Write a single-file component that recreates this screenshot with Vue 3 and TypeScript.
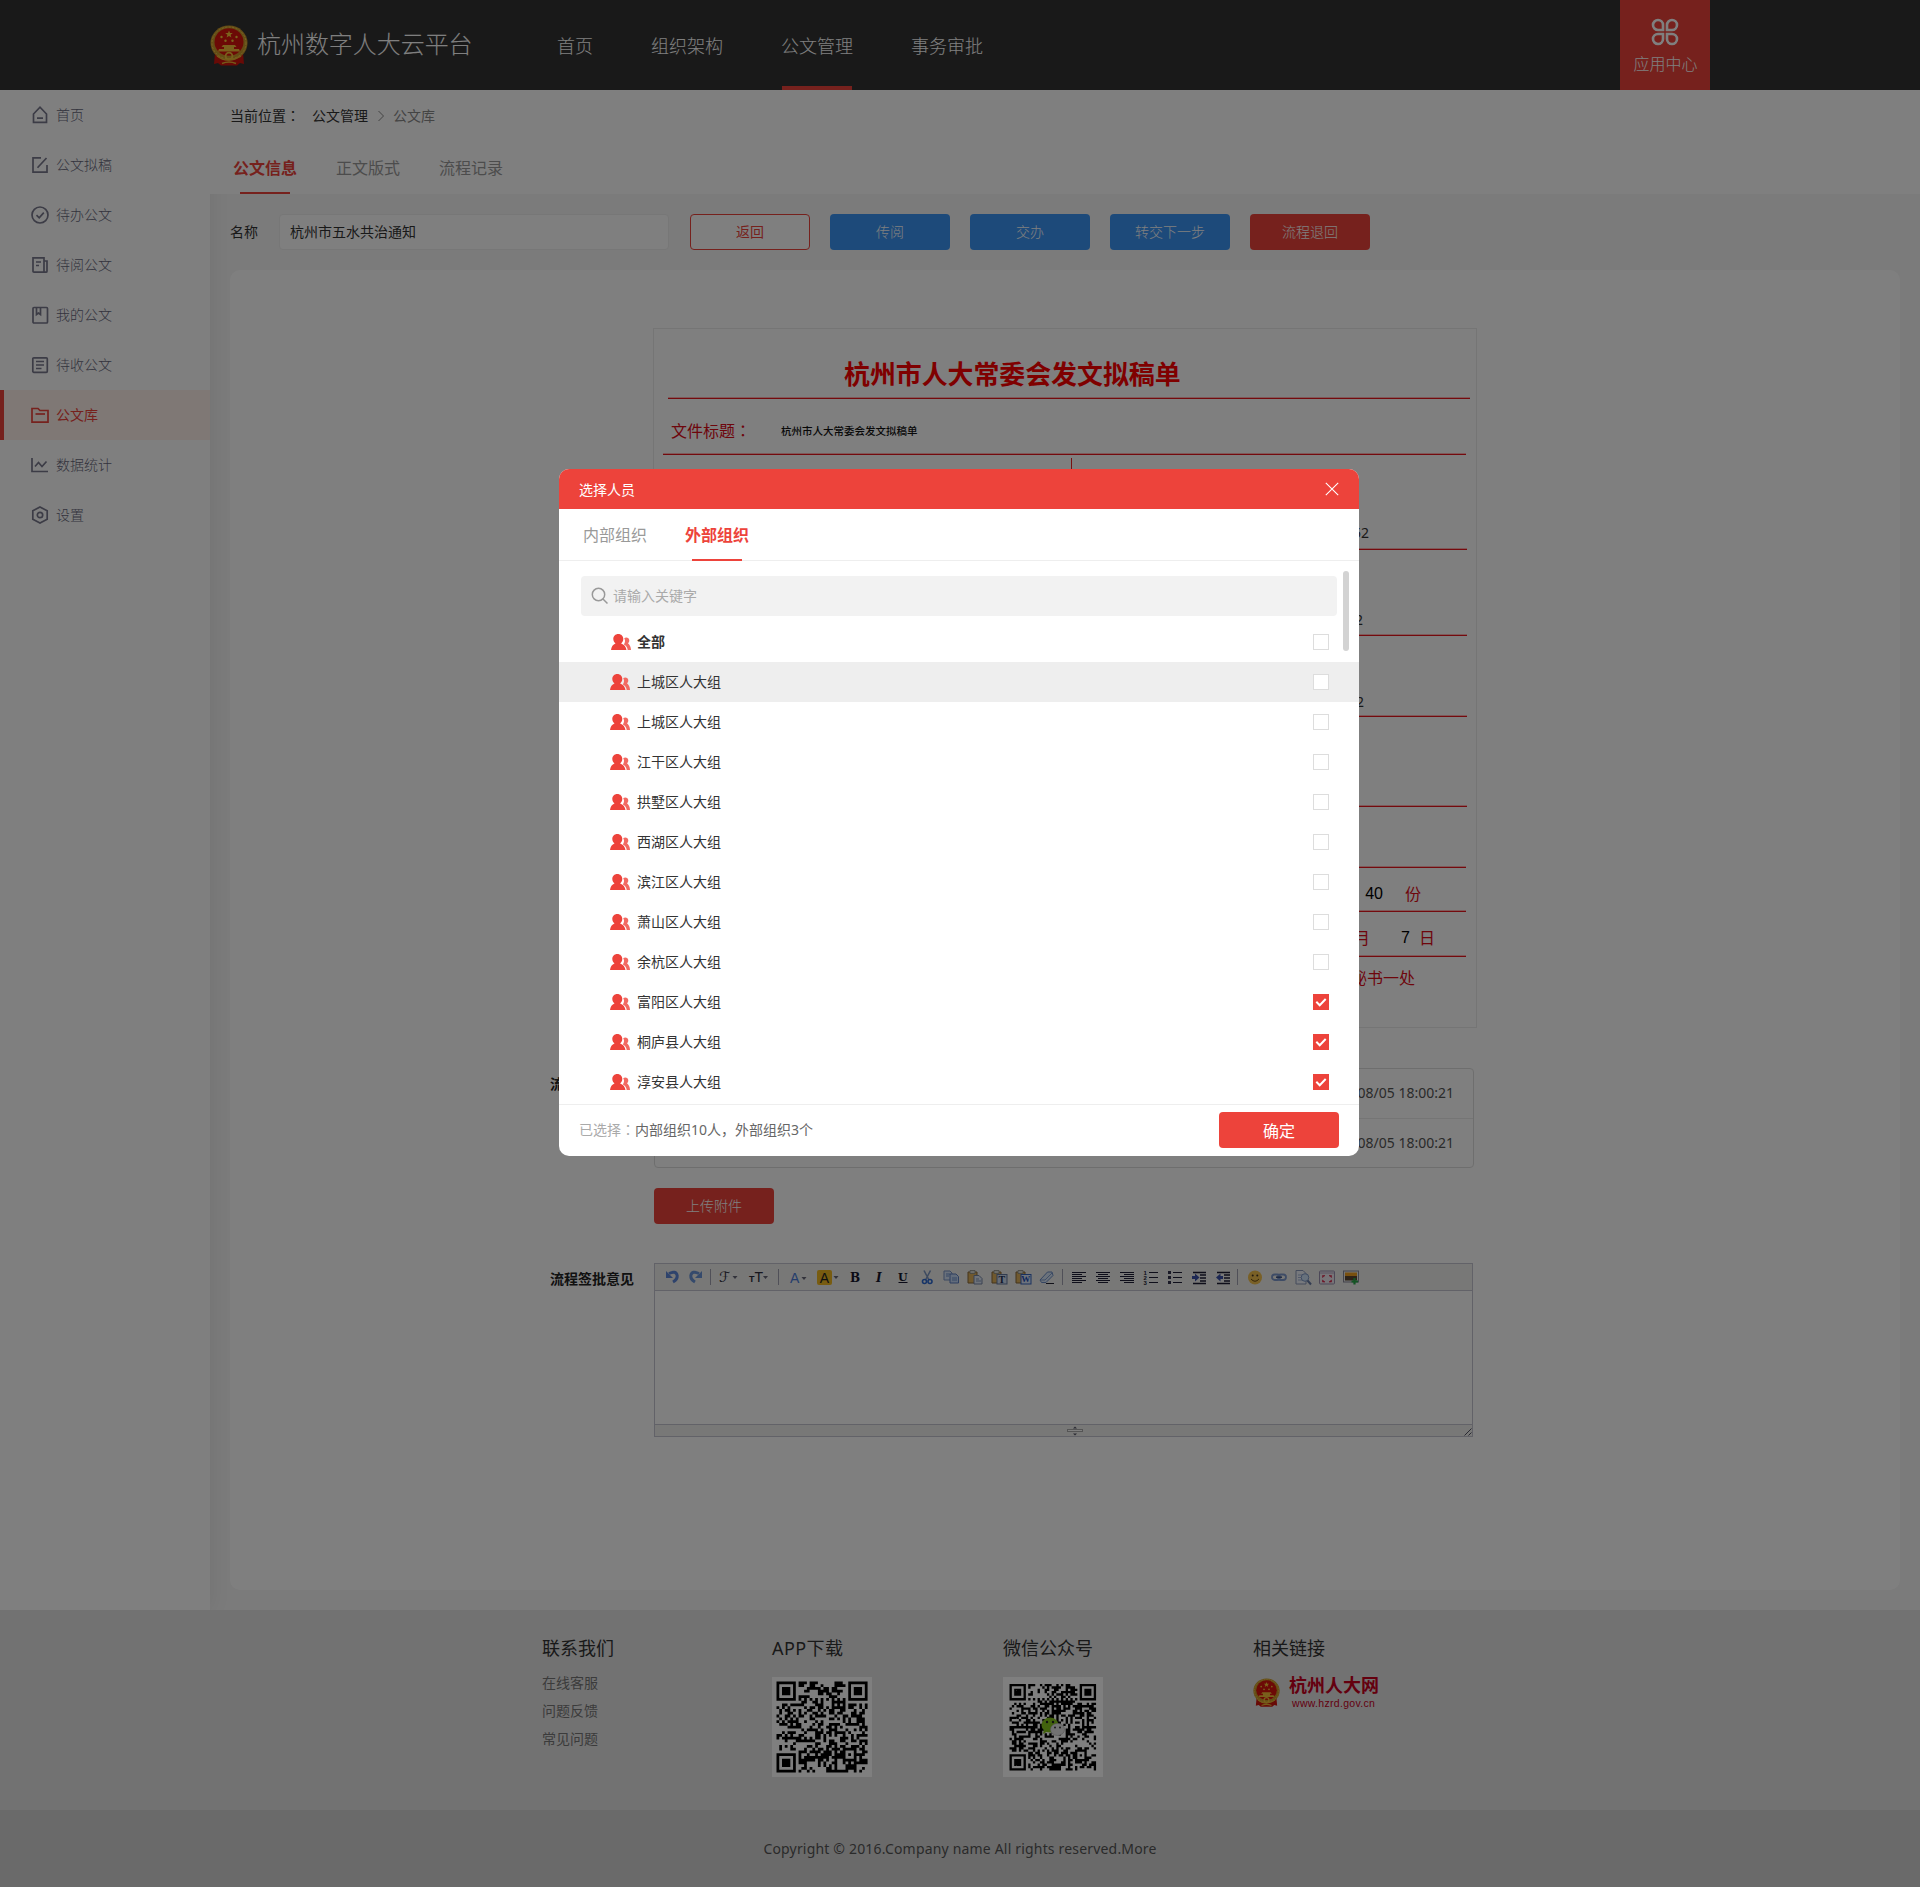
<script setup lang="ts">
interface SideItem { label: string; icon: string; active?: boolean }
interface Tool { kind: 'icon' | 'sep'; w: number; art?: string }
interface Group { name: string; checked: boolean; bold?: boolean; hover?: boolean }

const navItems: string[] = ['首页', '组织架构', '公文管理', '事务审批']

const sideItems: SideItem[] = [
  { label: '首页', icon: '<path d="M2.5 8 9 1.2 15.500 8V16.300H2.500Z"/><path d="M6 12.200h6"/>' },
  { label: '公文拟稿', icon: '<path d="M10 1.800H2V16.200H16V9"/><path d="M6.500 11.800 15.500 2"/>' },
  { label: '待办公文', icon: '<circle cx="9" cy="9" r="8"/><path d="M5.500 9.200 8.200 11.800 12.800 6.600"/>' },
  { label: '待阅公文', icon: '<path d="M2 1.800H13V16.200H3Q2 16.200 2 15.200Z"/><path d="M13 5h3v10.200q0 1-1 1h-2"/><path d="M5 6h5M5 9.500h3"/>' },
  { label: '我的公文', icon: '<rect x="2" y="1.500" width="14.500" height="15.500" rx="1"/><path d="M5.500 2v6.500L7.500 7l2 1.500V2"/>' },
  { label: '待收公文', icon: '<rect x="1.800" y="1.800" width="14.500" height="14.500" rx="1"/><path d="M5 5.500h8M5 9h8M5 12.500h5.500"/>' },
  { label: '公文库', icon: '<path d="M1 16V2.500H7L9 4.500H17V16.200H1Z"/><path d="M4.500 8h9.500"/>', active: true },
  { label: '数据统计', icon: '<path d="M1 2V15.500H17"/><path d="M4 10.500 7.500 6.500 11 10.500 15.500 5.500"/>' },
  { label: '设置', icon: '<path d="M9 1 16.200 4.800V13.200L9 17 1.800 13.200V4.800Z"/><circle cx="9" cy="9" r="2.700"/>' }
]

const actions: { label: string; tone: string }[] = [
  { label: '返回', tone: 'outline' },
  { label: '传阅', tone: 'blue' },
  { label: '交办', tone: 'blue' },
  { label: '转交下一步', tone: 'blue' },
  { label: '流程退回', tone: 'red' }
]

const clip = '<path d="M1 3h9v11H1z" fill="#e0b25c" stroke="#8a6a3a"/><path d="M3 1.500h5v3H3z" fill="#d8d8d0" stroke="#8a8a80" stroke-width=".8"/>'
const lines = (rows: [number, number][]): string =>
  rows.map(([x, w], i) => `<path d="M${x} ${3.5 + i * 2}h${w}" stroke="#1c1c34"/>`).join('')

const tools: Tool[] = [
  { kind: 'icon', w: 24, art: '<path d="M5 4.500Q12 1 13.200 6.500 13.500 10.500 9 13" fill="none" stroke="#5d86d8" stroke-width="3"/><path d="M2 2v7h7z" fill="#5d86d8"/>' },
  { kind: 'icon', w: 26, art: '<path d="M11 4.500Q4 1 2.800 6.500 2.500 10.500 7 13" fill="none" stroke="#6a94d8" stroke-width="3"/><path d="M14 2v7H7z" fill="#6a94d8"/>' },
  { kind: 'sep', w: 7 },
  { kind: 'icon', w: 30, art: '<text x="-2" y="13" font-family="DejaVu Sans" font-size="14" fill="#2a2a3a">ℱ</text><path d="M11.500 7h5l-2.500 3z" fill="#667"/>' },
  { kind: 'icon', w: 31, art: '<text x="-2" y="13" font-family="Liberation Sans" font-size="9" font-weight="bold" fill="#2a2a3a">T</text><text x="3.500" y="13" font-family="Liberation Sans" font-size="14" fill="#2a2a3a">T</text><path d="M12 7h5l-2.500 3z" fill="#667"/>' },
  { kind: 'sep', w: 8 },
  { kind: 'icon', w: 30, art: '<text x="0" y="13.500" font-family="Liberation Sans" font-size="14" fill="#4a7ad8">A</text><path d="M11.500 8h5l-2.500 3z" fill="#667"/>' },
  { kind: 'icon', w: 27, art: '<rect x="-3" y="1" width="15" height="15" rx="2" fill="#f0b820"/><text x="-.3" y="13.500" font-family="Liberation Sans" font-size="14" fill="#222">A</text><path d="M13.500 7h5L16 10z" fill="#667"/>' },
  { kind: 'icon', w: 24, art: '<text x="3" y="12.500" font-family="DejaVu Serif" font-weight="bold" font-size="12" fill="#14142c">B</text>' },
  { kind: 'icon', w: 24, art: '<text x="5" y="12.500" font-family="DejaVu Serif" font-weight="bold" font-style="italic" font-size="12" fill="#14142c">I</text>' },
  { kind: 'icon', w: 24, art: '<text x="3" y="11.500" font-family="DejaVu Serif" font-weight="bold" font-size="11" fill="#14142c">U</text><path d="M3.500 13.500h9" stroke="#14142c"/>' },
  { kind: 'icon', w: 24, art: '<path d="M5 1.500 10 11M11.500 1.500 6.500 11" stroke="#7d96c0" stroke-width="1.600"/><circle cx="5.500" cy="12.500" r="2" fill="none" stroke="#2f6ad0" stroke-width="1.600"/><circle cx="11" cy="12.500" r="2" fill="none" stroke="#2f6ad0" stroke-width="1.600"/>' },
  { kind: 'icon', w: 24, art: '<path d="M1 2h6l2 2v7H1z" fill="#d5e2f6" stroke="#7893c4"/><path d="M7 5h6l2.500 2.500V14H7z" fill="#c4d8f6" stroke="#5c7ec0"/><path d="M3 5h4M3 7h3M9 9h5M9 11h5" stroke="#6d90cc"/>' },
  { kind: 'icon', w: 24, art: clip + '<path d="M7 6.500h5l3 3V15H7z" fill="#dde6f4" stroke="#7484a4"/><path d="M9 10h3M9 12h5" stroke="#8496b8"/>' },
  { kind: 'icon', w: 24, art: clip + '<rect x="6" y="5.500" width="10" height="9.500" fill="#cfdcf0" stroke="#65799e"/><text x="7.500" y="13.500" font-family="Liberation Serif" font-weight="bold" font-size="10" fill="#222c50">T</text>' },
  { kind: 'icon', w: 24, art: clip + '<rect x="6" y="5.500" width="10" height="9.500" fill="#dce8fa" stroke="#3564c0"/><text x="6.300" y="13.300" font-family="Liberation Serif" font-weight="bold" font-size="9" fill="#1f50b8">W</text>' },
  { kind: 'icon', w: 27, art: '<path d="M1 11 8.500 3 13 3 14 6.500 7 13.500H2.500Z" fill="#d6e4f6" stroke="#6a8bc4"/><path d="M2 11h4L13 4" fill="none" stroke="#6a8bc4" stroke-width=".8"/><path d="M7 14.500h8" stroke="#223"/>' },
  { kind: 'sep', w: 5 },
  { kind: 'icon', w: 24, art: lines([[1, 14], [1, 10], [1, 14], [1, 10], [1, 14], [1, 10]]) },
  { kind: 'icon', w: 24, art: lines([[1, 14], [3, 10], [1, 14], [3, 10], [1, 14], [3, 10]]) },
  { kind: 'icon', w: 24, art: lines([[1, 14], [5, 10], [1, 14], [5, 10], [1, 14], [5, 10]]) },
  { kind: 'icon', w: 24, art: '<path d="M6 3.500h9M6 8.500h9M6 13.500h9" stroke="#1c1c34"/><g font-family="Liberation Sans" font-size="6" font-weight="bold" fill="#1c1c34"><text x=".5" y="5.500">1</text><text x=".5" y="10.500">2</text><text x=".5" y="15.800">3</text></g>' },
  { kind: 'icon', w: 24, art: '<path d="M6 3.500h9M6 8.500h9M6 13.500h9" stroke="#1c1c34"/><path d="M1 2h3v3H1zM1 7h3v3H1zM1 12h3v3H1z" fill="#34344e"/>' },
  { kind: 'icon', w: 24, art: '<path d="M2 3.500h13M2 14.500h13M9 6h6M9 9h6M9 12h6" stroke="#1c1c34" stroke-width="1.300"/><path d="M1 7h3V4.500L8.500 8.500 4 12.500V10H1z" fill="#3a50a8"/>' },
  { kind: 'icon', w: 26, art: '<path d="M2 3.500h13M2 14.500h13M9 6h6M9 9h6M9 12h6" stroke="#1c1c34" stroke-width="1.300"/><path d="M8 7H5.500V4.500L1 8.500l4.500 4V10H8z" fill="#3a50a8"/>' },
  { kind: 'sep', w: 6 },
  { kind: 'icon', w: 24, art: '<circle cx="8" cy="8.500" r="7" fill="#f2c04c"/><path d="M4 10q4 4.500 8 0" fill="none" stroke="#6a4a10"/><circle cx="5.700" cy="6.500" r="1" fill="#432"/><circle cx="10.300" cy="6.500" r="1" fill="#432"/>' },
  { kind: 'icon', w: 24, art: '<rect x="1" y="5.500" width="8" height="5.500" rx="2.700" fill="none" stroke="#7d98cc" stroke-width="1.800"/><rect x="7" y="5.500" width="8" height="5.500" rx="2.700" fill="none" stroke="#7d98cc" stroke-width="1.800"/><path d="M5 8.200h6" stroke="#3d5488" stroke-width="1.500"/>' },
  { kind: 'icon', w: 24, art: '<path d="M1 1.500h7l3 3V15H1z" fill="#eef2fa" stroke="#8b98b8"/><path d="M3 6h4M3 8.500h3M3 11h4" stroke="#a4b4d4"/><circle cx="10" cy="8.500" r="3.800" fill="#cfe2f8" stroke="#7d98c4"/><path d="M12.500 11.500 16 15.500" stroke="#667aa4" stroke-width="2"/>' },
  { kind: 'icon', w: 24, art: '<rect x=".5" y="2" width="15" height="13" rx="1" fill="#eee8f0" stroke="#9a90b0"/><path d="M1 4h14" stroke="#b4a8c4"/><path d="M3.500 6.500h2.500L3.500 8.500zM12.500 6.500H10l2.500 2zM3.500 13h2.500l-2.500-2zM12.500 13H10l2.500-2z" fill="#d8284c" stroke="#d8284c" stroke-width=".6"/>' },
  { kind: 'icon', w: 24, art: '<rect x=".5" y="2" width="15" height="11" fill="#eee" stroke="#889"/><path d="M2 3.500h12V7H2z" fill="#f2a020"/><path d="M2 7h12v4.500H2z" fill="#5c4630"/><path d="M11.500 9v6.500M8.500 12.500h6.500" stroke="#28a848" stroke-width="2.200"/>' }
]

const groups: Group[] = [
  { name: '全部', checked: false, bold: true },
  { name: '上城区人大组', checked: false, hover: true },
  { name: '上城区人大组', checked: false },
  { name: '江干区人大组', checked: false },
  { name: '拱墅区人大组', checked: false },
  { name: '西湖区人大组', checked: false },
  { name: '滨江区人大组', checked: false },
  { name: '萧山区人大组', checked: false },
  { name: '余杭区人大组', checked: false },
  { name: '富阳区人大组', checked: true },
  { name: '桐庐县人大组', checked: true },
  { name: '淳安县人大组', checked: true }
]

// Builds a QR-style module path: finder squares, timing rows, one alignment mark and seeded data.
function qrPath(n: number, seed: number): string {
  let s = seed
  const rand = (): number => {
    s = (s * 1103515245 + 12345) % 2147483648
    return s / 2147483648
  }
  const ring = (dx: number, dy: number, r: number): boolean => {
    const d = Math.max(Math.abs(dx), Math.abs(dy))
    return r === 3 ? d !== 2 : d !== 1
  }
  let d = ''
  for (let y = 0; y < n; y++) {
    for (let x = 0; x < n; x++) {
      let on = rand() > 0.48
      for (const [cx, cy] of [[3, 3], [n - 4, 3], [3, n - 4]]) {
        const dist = Math.max(Math.abs(x - cx), Math.abs(y - cy))
        if (dist <= 4) on = dist < 4 && ring(x - cx, y - cy, 3)
      }
      if (Math.max(Math.abs(x - n + 7), Math.abs(y - n + 7)) <= 2) on = ring(x - n + 7, y - n + 7, 2)
      if ((y === 6 && x > 7 && x < n - 8) || (x === 6 && y > 7 && y < n - 8)) on = (x + y) % 2 === 0
      if (on) d += `M${x} ${y}h1v1h-1z`
    }
  }
  return d
}
const qrApp = qrPath(33, 77)
const qrWechat = qrPath(37, 4321)
</script>

<template>
  <div class="page">
    <svg width="0" height="0" class="defs">
      <symbol id="emblem" viewBox="0 0 38 42">
        <path d="M5 28h28l1 11-4-1-3 2.500H11L8 38l-4 1z" fill="#d0140c" />
        <ellipse cx="19" cy="18" rx="18.500" ry="17.500" fill="#c9982a" />
        <ellipse cx="19" cy="18" rx="17" ry="16" fill="none" stroke="#f0cc50" stroke-width="1" stroke-dasharray="2 1.500" />
        <ellipse cx="19" cy="17" rx="14.500" ry="13.800" fill="#d8140c" />
        <path d="M19 5.500l1 2.600h2.800l-2.200 1.700.8 2.700-2.400-1.600-2.400 1.600.8-2.700-2.200-1.700H18z" fill="#f6c83a" />
        <g fill="#f6c83a"><circle cx="11.500" cy="12" r="1.200" /><circle cx="26.500" cy="12" r="1.200" /><circle cx="15.500" cy="15.800" r="1.200" /><circle cx="22.500" cy="15.800" r="1.200" /></g>
        <path d="M13 20h12l1.500 2H24v2h5l1 2.500H8L9 24h5v-2h-2.500z" fill="#f2be38" />
        <circle cx="19" cy="31" r="3.400" fill="none" stroke="#f2be38" stroke-width="1.800" />
        <path d="M7 31q6 4.500 12 4t12-4M12 38.500q7-3 14 0" fill="none" stroke="#eab432" stroke-width="1.500" />
      </symbol>
      <symbol id="people" viewBox="0 0 20 16">
        <path d="M13.200 4.200c.6-.6 1.300-.8 2-.8 1.800 0 3.100 1.300 3.100 3 0 1.200-.5 2.200-1.300 2.800 1.700 1.500 2.900 3.600 3 6.800h-3.300c-.3-2.600-1.500-4.300-3.800-5.600.7-.9 1.100-2.200 1.100-3.600 0-1-.3-1.900-.8-2.600z" fill="#f26a62" />
        <path d="M7.300 0c3 0 5 2.200 5 5 0 1.900-.9 3.500-2.200 4.400C13 10.400 15 12.500 15.500 16H0c.4-3.500 2-5.600 4.500-6.600C3.200 8.500 2.300 6.900 2.300 5c0-2.800 2-5 5-5z" fill="#ed433b" />
      </symbol>
    </svg>

    <header class="top">
      <svg class="top-emblem"><use href="#emblem" /></svg>
      <h1>杭州数字人大云平台</h1>
      <nav>
        <a v-for="(n, i) in navItems" :key="n" :class="{ on: i === 2 }">{{ n }}</a>
      </nav>
      <div class="apps">
        <svg width="28" height="28" viewBox="0 0 28 28" fill="none" stroke="#fff" stroke-width="2.600">
          <path d="M12 12H7a5 5 0 1 1 5-5zM16 12V7a5 5 0 1 1 5 5zM12 16v5a5 5 0 1 1-5-5zM16 16h5a5 5 0 1 1-5 5z" />
        </svg>
        <span>应用中心</span>
      </div>
    </header>

    <div class="body">
      <aside>
        <div v-for="it in sideItems" :key="it.label" class="side" :class="{ active: it.active }">
          <svg width="18" height="18" viewBox="0 0 18 18" v-html="it.icon"></svg>
          <span>{{ it.label }}</span>
        </div>
      </aside>

      <main>
        <section class="heading">
          <div class="crumb">
            <span>当前位置<i class="colon">：</i></span>
            <span class="c2">公文管理</span>
            <svg width="8" height="12" viewBox="0 0 8 12"><path d="M1.500 1 6.500 6 1.500 11" fill="none" stroke="#888" /></svg>
            <span class="c3">公文库</span>
          </div>
          <div class="tabs">
            <span class="on">公文信息</span><span>正文版式</span><span>流程记录</span>
          </div>
        </section>

        <section class="bar">
          <label>名称</label>
          <div class="field">杭州市五水共治通知</div>
          <button v-for="a in actions" :key="a.label" class="btn" :class="a.tone">{{ a.label }}</button>
        </section>

        <section class="card">
          <div class="doc">
            <div class="row r1">杭州市人大常委会发文拟稿单</div>
            <div class="row r2"><b>文件标题<i class="colon">：</i></b><em>杭州市人大常委会发文拟稿单</em></div>
            <div class="row r3"><i class="split"></i><span>52</span></div>
            <div class="row r4"><span>2</span></div>
            <div class="row r5"><span>2</span></div>
            <div class="row r6"></div>
            <div class="row r7"></div>
            <div class="row r8"><span class="num">40</span><span>份</span></div>
            <div class="row r9"><span>月</span><span class="num">7</span><span>日</span></div>
            <div class="row r10"><span>秘书一处</span></div>
          </div>

          <div class="line files">
            <strong>流程附件</strong>
            <div class="times">
              <div>2018/08/05 18:00:21</div>
              <div>2018/08/05 18:00:21</div>
            </div>
          </div>
          <button class="btn red upload">上传附件</button>

          <div class="line opinion">
            <strong>流程签批意见</strong>
            <div class="editor">
              <div class="tools">
                <template v-for="(t, i) in tools" :key="i">
                  <i v-if="t.kind === 'sep'" class="sep" :style="{ marginRight: t.w - 1 + 'px' }"></i>
                  <span v-else :style="{ width: t.w + 'px' }"><svg width="16" height="16" viewBox="0 0 16 16" v-html="t.art"></svg></span>
                </template>
              </div>
              <div class="area"></div>
              <div class="grip">
                <svg width="16" height="10" viewBox="0 0 16 10"><rect x=".5" y="3.500" width="15" height="2" fill="#fff" stroke="#aaa" /><path d="M6 2.500 8 .5 10 2.500zM6 7.500 8 9.500 10 7.500z" fill="#556" /></svg>
                <svg class="corner" width="8" height="8" viewBox="0 0 8 8"><path d="M.5 7.500 7.500.500M4.500 7.500l3-3" stroke="#556" /></svg>
              </div>
            </div>
          </div>
        </section>
      </main>
    </div>

    <footer>
      <div class="col contact">
        <h3>联系我们</h3>
        <a>在线客服</a><a>问题反馈</a><a>常见问题</a>
      </div>
      <div class="col app">
        <h3>APP下载</h3>
        <svg class="qr" viewBox="0 0 100 100"><path :d="qrApp" transform="translate(4.500 4.500) scale(2.760)" /></svg>
      </div>
      <div class="col wechat">
        <h3>微信公众号</h3>
        <svg class="qr" viewBox="0 0 100 100">
          <path :d="qrWechat" transform="translate(6.500 7) scale(2.340)" />
          <ellipse cx="47" cy="48" rx="8.500" ry="7.500" fill="#84c41c" /><path d="M41 52l-1 5 5-3z" fill="#84c41c" />
          <circle cx="44" cy="45" r="1.200" fill="#222" /><circle cx="50" cy="45" r="1.200" fill="#222" />
          <ellipse cx="54.500" cy="52.500" rx="7" ry="6" fill="#e4e4e4" stroke="#aaa" stroke-width=".6" />
          <circle cx="52" cy="50.500" r="1" fill="#333" /><circle cx="57" cy="50.500" r="1" fill="#333" />
        </svg>
      </div>
      <div class="col links">
        <h3>相关链接</h3>
        <div class="site">
          <svg><use href="#emblem" /></svg>
          <div><b>杭州人大网</b><small>www.hzrd.gov.cn</small></div>
        </div>
      </div>
    </footer>
    <div class="copy">Copyright © 2016.Company name All rights reserved.More</div>

    <div class="mask"></div>
    <div class="modal">
      <div class="m-head">
        <span>选择人员</span>
        <svg width="14" height="14" viewBox="0 0 14 14"><path d="M.8.8 13.200 13.200M13.200.8.8 13.200" stroke="#fff" stroke-width="1.100" /></svg>
      </div>
      <div class="m-tabs"><span>内部组织</span><span class="on">外部组织</span></div>
      <div class="m-body">
        <div class="search">
          <svg width="18" height="18" viewBox="0 0 18 18" fill="none" stroke="#999" stroke-width="1.500"><circle cx="7.500" cy="7.500" r="6.200" /><path d="M12 12 16.500 16.500" /></svg>
          <span>请输入关键字</span>
        </div>
        <div v-for="(g, i) in groups" :key="i" class="g" :class="{ hover: g.hover, bold: g.bold }">
          <svg width="20" height="16"><use href="#people" /></svg>
          <span>{{ g.name }}</span>
          <i class="check" :class="{ on: g.checked }">
            <svg v-if="g.checked" width="16" height="16" viewBox="0 0 16 16"><path d="M3.300 7.800 6.700 11.200 12.700 5" fill="none" stroke="#fff" stroke-width="2" /></svg>
          </i>
        </div>
        <div class="thumb"></div>
      </div>
      <div class="m-foot">
        <span class="lab">已选择<i class="colon">：</i></span>
        <span class="val">内部组织10人，外部组织3个</span>
        <button class="btn red ok">确定</button>
      </div>
    </div>
  </div>
</template>

<style>
body { margin: 0; }
</style>

<style scoped>
.page {
  position: relative;
  width: 1920px;
  height: 1887px;
  overflow: hidden;
  background: #f6f6f6;
  font-family: "Noto Sans", "Noto Sans CJK SC", sans-serif;
  font-size: 14px;
  line-height: 20px;
  color: #333;
}
.page * { box-sizing: border-box; }
.defs { position: absolute; }
i { font-style: normal; }
.colon { font-family: "Noto Sans CJK JP", sans-serif; line-height: 0; }
svg { flex: none; overflow: visible; display: block; }

.top { display: flex; height: 90px; padding-left: 210px; background: #333; color: #fff; }
.top-emblem { width: 38px; height: 42px; margin-top: 25px; }
.top h1 { width: 299px; margin: 0 0 0 9px; padding-right: 1px; font-size: 24px; font-weight: 300; line-height: 88px; letter-spacing: -.05px; white-space: nowrap; }
.top nav { display: flex; gap: 58px; margin-left: 1px; }
.top nav a { position: relative; font-size: 18px; line-height: 92px; font-weight: 300; }
.top nav a.on::after { content: ""; position: absolute; left: 1px; right: 1px; top: 86px; height: 4px; background: #ed433b; }
.apps { display: flex; flex-direction: column; align-items: center; width: 90px; margin-left: 637px; padding-top: 18px; background: #ed433b; font-size: 16px; font-weight: 300; }
.apps span { margin-top: 8px; padding-left: 1px; }

.body { display: flex; height: 1520px; }
aside { position: relative; width: 210px; background: #fff; box-shadow: 0 0 20px rgba(0, 0, 0, .08); color: #66667a; z-index: 1; clip-path: polygon(0 0, 210px 0, 210px 104px, 230px 104px, 230px 100%, 0 100%); }
.side { display: flex; align-items: center; height: 50px; padding-left: 31px; font-weight: 300; }
.side svg { margin-right: 7px; fill: none; stroke: #78788c; stroke-width: 1.7; }
.side.active { padding-left: 27px; border-left: 4px solid #ed433b; background: #fff0ea; color: #ed433b; }
.side.active span { font-weight: 400; }
.side.active svg { stroke: #ed433b; }

main { width: 1710px; }
.heading { height: 104px; background: #fff; padding: 15px 0 0 20px; }
.crumb { display: flex; align-items: center; height: 22px; }
.crumb .c2 { margin: 0 9px 0 12px; }
.crumb svg { margin-right: 3px; }
.crumb .c3 { color: #888; margin-left: 5px; }
.tabs { display: flex; gap: 39px; margin: 29px 0 0 3px; height: 38px; font-size: 16px; line-height: 24px; color: #999; }
.tabs .on, .m-tabs .on { position: relative; color: #ed433b; font-weight: 700; }
.tabs .on::after { content: ""; position: absolute; left: 7px; width: 50px; bottom: 0; height: 2px; background: #ed433b; }

.bar { display: flex; padding: 20px; height: 76px; }
.bar label { width: 49px; line-height: 36px; }
.field { width: 390px; height: 36px; margin-right: 1px; padding-left: 10px; line-height: 34px; background: #fff; border: 1px solid #eee; border-radius: 4px; }
.btn { width: 120px; height: 36px; padding: 0 0 2px; border: 0; border-radius: 4px; font: 300 14px/34px "Noto Sans CJK SC", sans-serif; color: #fff; }
.bar .btn { margin-left: 20px; }
.blue { background: #3a94f5; }
.red { background: #ed433b; }
.outline { background: #fff; border: 1px solid #ed433b; color: #ed433b; line-height: 32px; font-weight: 400; }

.card { width: 1670px; height: 1320px; margin-left: 20px; padding: 58px 0 0; background: #fff; border-radius: 10px; }
.doc { width: 824px; height: 700px; margin-left: 423px; border: 1px solid #ebebeb; color: #dd0c18; font-size: 16px; line-height: 20px; }
.row { display: flex; align-items: flex-end; justify-content: flex-end; width: 803px; margin-left: 9px; border-bottom: 1px solid #e8141c; box-shadow: inset 0 -1px rgba(255, 0, 0, .3); }
.r1 { width: 802px; height: 70px; margin-left: 14px; justify-content: flex-start; padding: 0 0 6px 176px; font-size: 25.9px; line-height: 36px; font-weight: 700; color: #ff0000; }
.r2 { height: 56px; justify-content: flex-start; padding: 0 0 13px 8px; }
.r2 b { width: 110px; font-weight: 400; }
.r2 em { font-style: normal; font-size: 10.5px; font-weight: 500; color: #111; }
.r3, .r4, .r5, .r6 { width: 804px; font-size: 14px; color: #333; padding: 0 98px 6px 0; }
.r3 { height: 95px; position: relative; }
.split { position: absolute; left: 408px; top: 3px; height: 92px; width: 1px; background: #f02020; }
.r4 { height: 86px; padding: 0 104px 5px 0; }
.r5 { height: 81px; padding: 0 103px 4px 0; }
.r6 { height: 90px; }
.r7 { height: 61px; }
.r8 { height: 44px; padding: 0 45px 7px 0; }
.r8 .num { margin-right: 22px; }
.r9 { height: 45px; padding: 0 31px 8px 0; }
.r9 .num { margin: 0 9px 0 31px; }
.r10 { height: 31px; padding-right: 51px; border: 0; box-shadow: none; }
.num { font-family: "Liberation Sans", sans-serif; color: #000; }

.line { display: flex; margin-left: 320px; }
.line strong { width: 104px; color: #222; }
.files { margin-top: 40px; }
.files strong { padding-top: 6px; }
.times { width: 820px; height: 100px; border: 1px solid #ddd; border-radius: 4px; color: #555; text-align: right; }
.times div { height: 49px; padding-right: 19px; line-height: 48px; }
.times div + div { border-top: 1px solid #eaeaea; }
.upload { display: block; margin: 20px 0 0 424px; }
.opinion { margin-top: 39px; }
.opinion strong { padding-top: 6px; }
.editor { width: 819px; height: 174px; border: 1px solid #c5c5d0; }
.tools { display: flex; align-items: center; height: 27px; padding: 0 0 1px 5px; background: #f0f0ee; border-bottom: 1px solid #c5c5d0; }
.tools span { display: block; padding-left: 4px; }
.sep { width: 1px; height: 16px; background: #a0a0b0; }
.area { height: 133px; }
.grip { position: relative; display: flex; justify-content: center; height: 12px; padding: 1px 0 0 22px; background: #f0f0ee; border-top: 1px solid #c5c5d0; }
.corner { position: absolute; right: 0; bottom: 0; }

footer { display: flex; height: 200px; padding: 26px 0 0 542px; background: #e5e5e5; }
.col h3 { margin: 0; font-size: 18px; line-height: 24px; font-weight: 400; color: #333; }
.contact { width: 230px; }
.contact h3 { margin-bottom: 9px; }
.contact a { display: block; line-height: 28px; color: #777; }
.app { width: 231px; }
.app h3 { letter-spacing: .4px; }
.wechat { width: 250px; }
.qr { width: 100px; height: 100px; margin-top: 17px; background: #fff; }
.site { display: flex; margin-top: 15px; color: #c8001e; }
.site svg { width: 27px; height: 30px; margin: 3px 9px 0 0; }
.site b, .site small { display: block; }
.site b { font-size: 18px; line-height: 20px; font-weight: 700; }
.site small { margin-left: 3px; font: 10.500px/17px "Liberation Sans", sans-serif; letter-spacing: .3px; }
.copy { height: 77px; line-height: 77px; background: #d5d5d5; text-align: center; color: #555; letter-spacing: .18px; }

.mask { position: absolute; inset: 0; background: rgba(0, 0, 0, .5); z-index: 5; }
.modal { position: absolute; z-index: 6; left: 559px; top: 469px; width: 800px; height: 687px; background: #fff; border-radius: 10px; overflow: hidden; }
.m-head { display: flex; justify-content: space-between; align-items: center; height: 40px; padding: 0 20px; background: #ed433b; color: #fff; }
.m-head span { padding-top: 1px; }
.m-tabs { display: flex; gap: 38px; height: 52px; padding: 14px 0 0 24px; border-bottom: 1px solid #eee; font-size: 16px; line-height: 24px; color: #999; }
.m-tabs .on::after { content: ""; position: absolute; left: 7px; width: 50px; bottom: -1px; height: 2px; background: #ed433b; }
.m-body { position: relative; height: 543px; padding-top: 15px; }
.search { display: flex; align-items: center; width: 756px; height: 40px; margin: 0 0 6px 22px; padding-left: 10px; background: #f2f2f2; border-radius: 4px; color: #aaa; }
.search span { margin-left: 4px; }
.g { display: flex; align-items: center; height: 40px; padding: 0 30px 0 51px; color: #333; }
.g span { margin-left: 7px; }
.g.bold { padding-left: 52px; font-weight: 700; }
.g.bold span { margin-left: 6px; }
.g.hover { background: #eee; }
.check { width: 16px; height: 16px; margin-left: auto; border: 1px solid #ddd; background: #fff; }
.check.on { border: 0; background: #ed433b; }
.thumb { position: absolute; right: 10px; top: 10px; width: 6px; height: 80px; border-radius: 3px; background: #d3d3d3; }
.m-foot { display: flex; height: 52px; padding: 8px 20px; border-top: 1px solid #eee; line-height: 34px; }
.lab { color: #aaa; }
.val { color: #666; }
.ok { margin-left: auto; margin-top: -1px; padding: 0; line-height: 36px; font-size: 16px; font-weight: 400; }
</style>
